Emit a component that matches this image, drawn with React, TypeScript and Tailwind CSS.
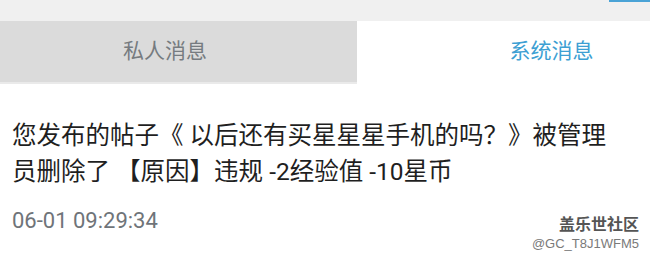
export default function App() {
  return (
    <div className="w-[650px] h-[266px] bg-white overflow-hidden font-['Roboto','Noto_Sans_CJK_SC',sans-serif]">
      {/* status strip */}
      <div className="h-[21px] bg-[#f0f0f0] flex justify-end">
        <div className="w-[41px] h-[2px] bg-[#4aa3d6]" />
      </div>

      {/* tabs */}
      <div className="flex h-[63px]">
        <div className="w-[357px] bg-[#dbdbdb] border-b-2 border-[#eaeaea] flex items-center justify-center pr-[27px]">
          <span className="text-[21px] text-[#767b80]">私人消息</span>
        </div>
        <div className="flex-1 bg-white flex items-center justify-center pl-[96px] pb-[2px]">
          <span className="text-[21px] text-[#3d9fd3]">系统消息</span>
        </div>
      </div>

      {/* message */}
      <div className="pl-[12px] pt-[34px]">
        <p className="w-[600px] text-[24.5px] leading-[36px] text-[#1f1f1f]">
          您发布的帖子《 以后还有买星星星手机的吗？》被管理员删除了 【原因】违规 -2经验值 -10星币
        </p>
        <div className="flex justify-between items-start mt-[17px] pr-[11px]">
          <span className="text-[22px] leading-[28px] text-[#6f7479]">06-01 09:29:34</span>
          <div className="flex flex-col items-end mt-[7px]">
            <span className="text-[16px] leading-[18px] font-bold text-[#555] font-['Noto_Sans_CJK_SC',sans-serif]">盖乐世社区</span>
            <span className="text-[13px] leading-[18px] mt-[3px] text-[#7a7a7a] font-['Liberation_Sans',sans-serif]">@GC_T8J1WFM5</span>
          </div>
        </div>
      </div>
    </div>
  );
}
